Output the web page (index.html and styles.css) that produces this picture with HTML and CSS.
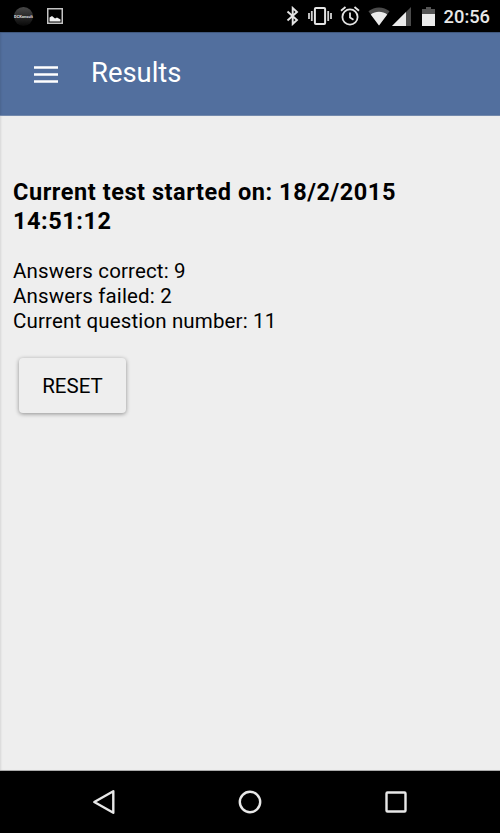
FILE: index.html
```
<!DOCTYPE html>
<html lang="en">
<head>
  <meta charset="UTF-8" />
  <meta name="viewport" content="width=device-width, initial-scale=1.0" />
  <title>Results</title>
  <link rel="stylesheet" href="styles.css">
</head>
<body>
  <div class="status-bar">
    <div class="notifications">
      <div class="app-badge">DCKonsult</div>
      <svg class="picture-icon" width="16" height="16" viewBox="0 0 16 16">
        <rect x="0.75" y="0.75" width="14.5" height="14.5" fill="none" stroke="#c4c4c4" stroke-width="1.5"/>
        <path d="M2.5 13.5V9.500l2.500-1.500 3 2.500 2-1 3.500 2v2z" fill="#f0f0f0"/>
      </svg>
    </div>
    <div class="system-icons">
      <svg class="bluetooth" width="14" height="20" viewBox="0 0 14 20">
        <path d="M1.500 5.500L11 14 6.700 18V2L11 6 1.500 14.500" fill="none" stroke="#e4e4e4" stroke-width="1.900"/>
      </svg>
      <svg class="vibrate" width="24" height="18" viewBox="0 0 24 18">
        <rect x="6.900" y="1" width="10.200" height="16" rx="1" fill="none" stroke="#e4e4e4" stroke-width="2"/>
        <path d="M1 6v6M3.800 4v10M20.200 4v10M23 6v6" stroke="#d4d4d4" stroke-width="1.800"/>
      </svg>
      <svg class="alarm" width="20" height="20" viewBox="0 0 20 20">
        <circle cx="10" cy="11" r="7.600" fill="none" stroke="#e4e4e4" stroke-width="1.800"/>
        <path d="M1 4.800L5.500 1M19 4.800L14.500 1M10 6.500v5l3.500 2.300" fill="none" stroke="#e4e4e4" stroke-width="1.800"/>
      </svg>
      <svg class="wifi" width="22" height="19" viewBox="0 0 24 19" preserveAspectRatio="none">
        <path d="M12 18.500L0.500 4.300C7 -0.800 17 -0.800 23.500 4.300z" fill="#4b4b4b"/>
        <path d="M12 18.500L3 7.500C8 3.800 16 3.800 21 7.500z" fill="#ebebeb"/>
      </svg>
      <svg class="signal" width="19" height="19" viewBox="0 0 19 19">
        <path d="M0 19L19 0v19z" fill="#4b4b4b"/>
        <path d="M0 19L14 5v14z" fill="#ebebeb"/>
      </svg>
      <svg class="battery" width="13" height="19" viewBox="0 0 13 19">
        <path d="M0 7V2h4V0h5v2h4v5z" fill="#555"/>
        <path d="M0 7h13v12H0z" fill="#ebebeb"/>
      </svg>
      <span class="clock">20:56</span>
    </div>
  </div>

  <header>
    <button class="menu-btn" aria-label="Menu">
      <svg width="24" height="17" viewBox="0 0 24 17">
        <path d="M0 1.500h24M0 8.500h24M0 15.500h24" stroke="#fff" stroke-width="2.600"/>
      </svg>
    </button>
    <h1>Results</h1>
  </header>

  <main>
    <h2>Current test started on: 18/2/2015 14:51:12</h2>
    <div class="results">
      <div>Answers correct: 9</div>
      <div>Answers failed: 2</div>
      <div>Current question number: 11</div>
    </div>
    <button class="reset-btn">RESET</button>
  </main>

  <nav>
    <svg width="24" height="26" viewBox="0 0 24 26">
      <path d="M21.300 2.200v21.600L2.300 13z" fill="none" stroke="#e8e8e8" stroke-width="2.400" stroke-linejoin="round"/>
    </svg>
    <svg width="24" height="24" viewBox="0 0 24 24">
      <circle cx="12" cy="12" r="10.200" fill="none" stroke="#e8e8e8" stroke-width="2.400"/>
    </svg>
    <svg width="24" height="24" viewBox="0 0 24 24">
      <rect x="2.500" y="2.500" width="19" height="19" rx="1" fill="none" stroke="#e8e8e8" stroke-width="2.400"/>
    </svg>
  </nav>
</body>
</html>
```

FILE: styles.css
```
* { box-sizing: border-box; margin: 0; padding: 0; }

body {
  display: flex;
  flex-direction: column;
  height: 833px;
  font-family: Roboto, sans-serif;
  background-color: #eee;
  color: #000;
  overflow: hidden;
}

svg {
  display: block;
  flex: none;
}

.status-bar {
  display: flex;
  justify-content: space-between;
  align-items: center;
  height: 32px;
  padding: 0 10px 0 14px;
  background-color: #000;
}

.notifications {
  display: flex;
  align-items: center;
  gap: 13.5px;
}

.app-badge {
  display: flex;
  align-items: center;
  justify-content: center;
  width: 19px;
  height: 19px;
  border-radius: 50%;
  background: linear-gradient(#484848, #222 60%, #080808);
  color: #ddd;
  font-size: 4px;
  font-weight: bold;
}

.system-icons {
  display: flex;
  align-items: center;
}

.vibrate {
  margin-left: 8px;
}

.alarm {
  margin-left: 8px;
}

.wifi {
  margin-left: 8px;
}

.signal {
  margin-left: 2px;
}

.battery {
  margin-left: 11px;
}

.clock {
  margin-left: 9px;
  padding-top: 2px;
  color: #e8e8e8;
  font-size: 18.3px;
  font-weight: 500;
  line-height: 32px;
}

header {
  display: flex;
  align-items: center;
  height: 84px;
  padding: 0 34px;
  background-color: #526f9e;
  border-top: 1px solid #40587d;
  border-bottom: 1px solid #7389ac;
  box-shadow: inset 2px 0 3px -2px rgba(0, 0, 0, 0.2);
  color: #fff;
}

.menu-btn {
  background: none;
  border: none;
}

h1 {
  margin-left: 33px;
  padding-bottom: 3px;
  font-size: 27.4px;
  font-weight: 400;
}

main {
  flex: 1;
  padding: 62px 13px 0;
  border-bottom: 1px solid #aaa;
  box-shadow: inset 2px 0 3px -2px rgba(0, 0, 0, 0.2);
}

h2 {
  font-size: 23.5px;
  font-weight: 700;
  line-height: 29px;
  letter-spacing: 0.56px;
}

.results {
  margin-top: 23px;
  font-size: 20.5px;
  line-height: 25px;
  letter-spacing: 0.14px;
}

.reset-btn {
  display: block;
  width: 107px;
  height: 55px;
  margin: 24px 0 0 6px;
  background-color: #eee;
  border: none;
  border-radius: 4px;
  box-shadow: 0 1px 4px rgba(0, 0, 0, 0.4);
  color: #000;
  font-family: inherit;
  font-size: 20.5px;
}

nav {
  display: flex;
  justify-content: space-between;
  align-items: center;
  height: 62px;
  padding: 0 92px;
  background-color: #000;
}
```
